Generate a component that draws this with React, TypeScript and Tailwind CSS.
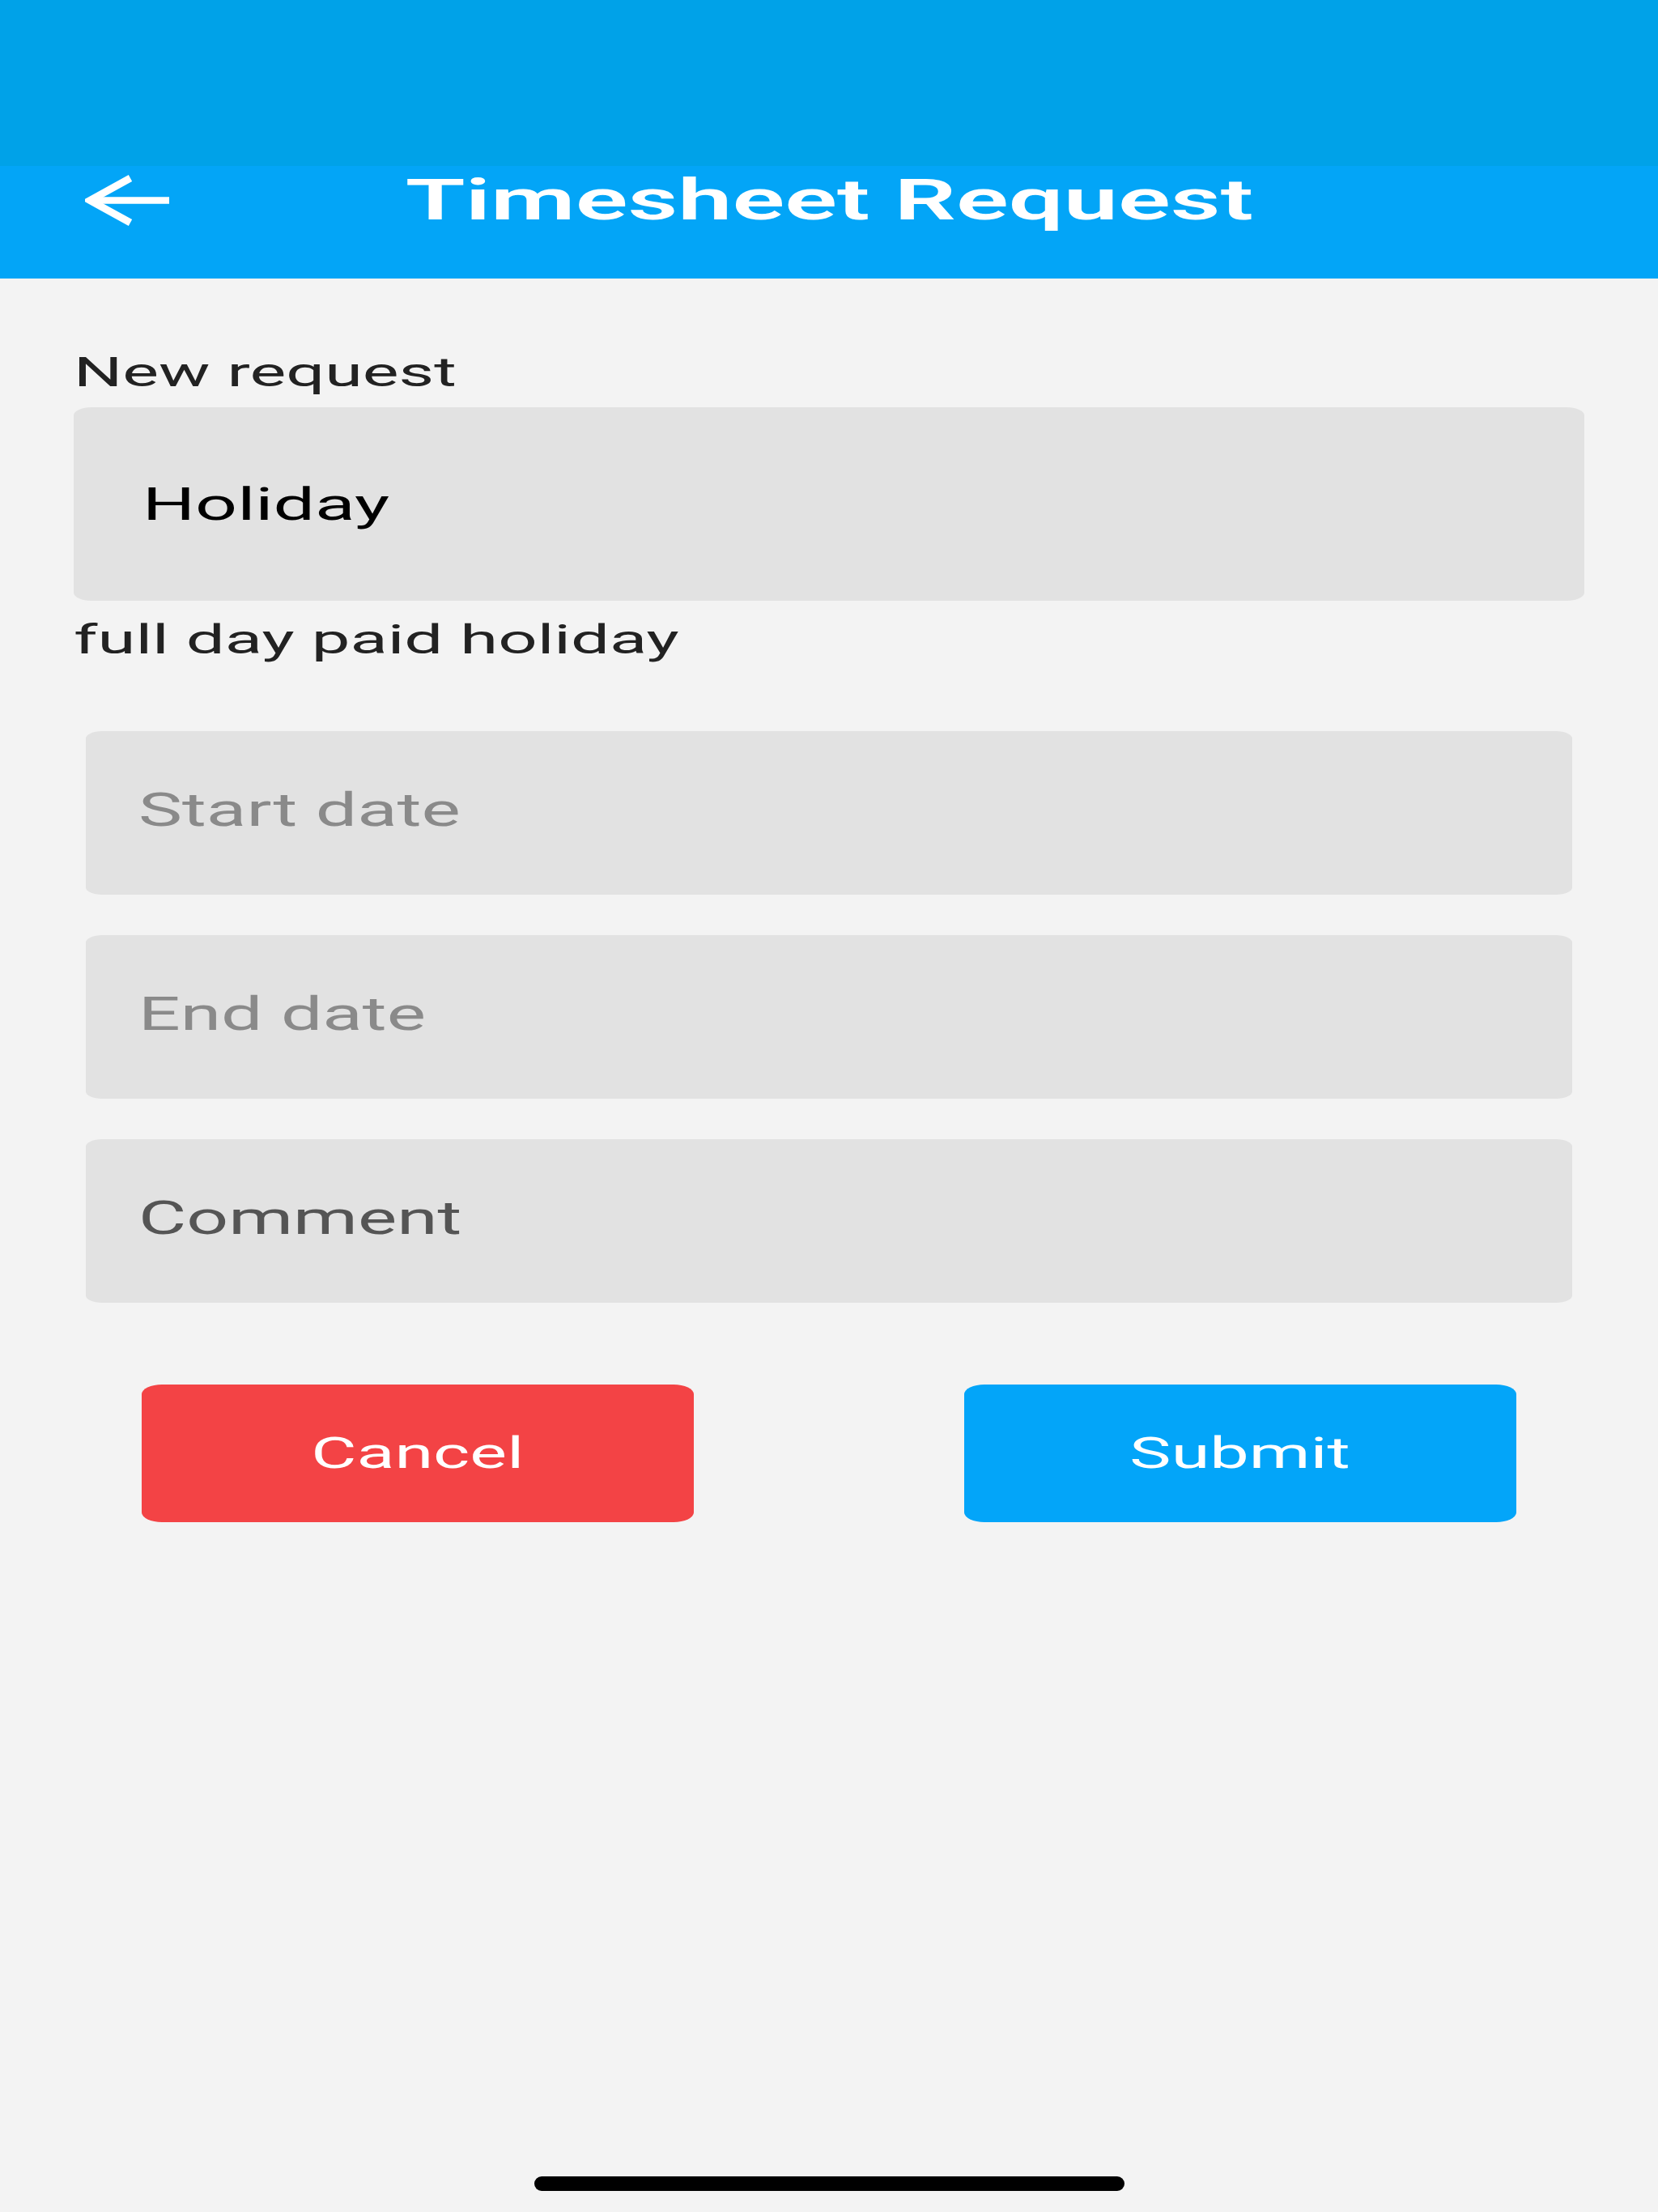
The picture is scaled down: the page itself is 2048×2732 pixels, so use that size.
import React from 'react';

const FONT = { fontFamily: 'Roboto, "Liberation Sans", sans-serif' };

function BackArrow() {
  return (
    <svg width="104" height="63" viewBox="0 0 104 63" fill="none" className="block">
      <path d="M8 31.5 H104" stroke="#fff" strokeWidth="8.5" />
      <path d="M56 4 L6 31.5 L56 59" stroke="#fff" strokeWidth="9" strokeLinejoin="miter" strokeMiterlimit="10" />
    </svg>
  );
}

function Field({ label, tone }: { label: string; tone: string }) {
  return (
    <div className="flex h-[202px] items-center rounded-[20px/9px] bg-[#e2e2e2] pb-[9px] pl-[65px]">
      <span className={`inline-block origin-left scale-x-[1.57] text-[58px] leading-none ${tone}`}>{label}</span>
    </div>
  );
}

export default function App() {
  return (
    <div className="flex h-screen w-full flex-col bg-[#f3f3f3]" style={FONT}>
      {/* status bar */}
      <div className="h-[205px] bg-[#00a2e8]" />

      {/* header */}
      <div className="h-[139px] bg-[#03a5f7]">
        <div className="grid h-[84px] grid-cols-[1fr_auto_1fr] items-center">
          <div className="pl-[105px]">
            <BackArrow />
          </div>
          <h1 className="inline-block origin-center scale-x-[1.72] text-[70px] font-semibold leading-none text-white">
            Timesheet Request
          </h1>
          <div />
        </div>
      </div>

      {/* form */}
      <div className="flex flex-col px-[91px] pt-[91px]">
        <p className="text-[50px] leading-none text-[#222]">
          <span className="inline-block origin-left scale-x-[1.69]">New request</span>
        </p>
        <div className="mt-[18px] flex h-[239px] items-center rounded-[22px/10px] bg-[#e2e2e2] pl-[85px]">
          <span className="inline-block origin-left scale-x-[1.63] text-[56px] leading-none text-black">Holiday</span>
        </div>
        <p className="mt-[23px] text-[50px] leading-none text-[#222]">
          <span className="inline-block origin-left scale-x-[1.7]">full day paid holiday</span>
        </p>
      </div>

      <div className="mt-[88px] flex flex-col gap-[50px] px-[106px]">
        <Field label="Start date" tone="text-[#8a8a8a]" />
        <Field label="End date" tone="text-[#8a8a8a]" />
        <Field label="Comment" tone="text-[#555]" />
      </div>

      <div className="mt-[101px] flex justify-between px-[175px]">
        <button className="flex h-[170px] w-[682px] items-center justify-center rounded-[25px/12px] bg-[#f34345] text-white">
          <span className="inline-block origin-center scale-x-[1.63] text-[53px] leading-none">Cancel</span>
        </button>
        <button className="flex h-[170px] w-[682px] items-center justify-center rounded-[25px/12px] bg-[#03a5f9] text-white">
          <span className="inline-block origin-center scale-x-[1.63] text-[53px] leading-none">Submit</span>
        </button>
      </div>

      <div className="flex-1" />
      <div className="mb-[26px] flex justify-center">
        <div className="h-[18px] w-[729px] rounded-full bg-black" />
      </div>
    </div>
  );
}
